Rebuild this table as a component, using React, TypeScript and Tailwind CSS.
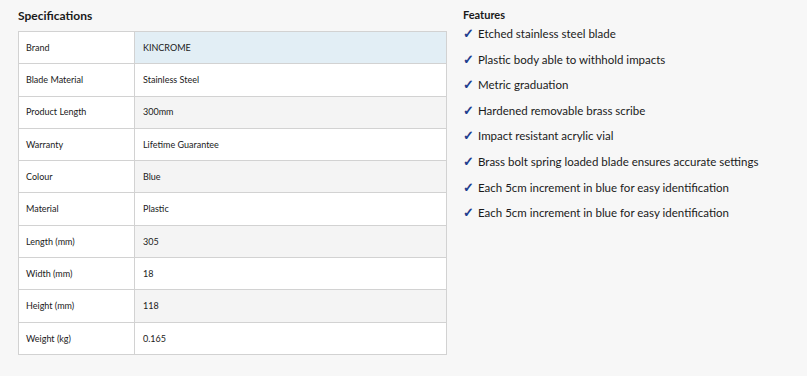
const specs: [string, string][] = [
  ['Brand', 'KINCROME'],
  ['Blade Material', 'Stainless Steel'],
  ['Product Length', '300mm'],
  ['Warranty', 'Lifetime Guarantee'],
  ['Colour', 'Blue'],
  ['Material', 'Plastic'],
  ['Length (mm)', '305'],
  ['Width (mm)', '18'],
  ['Height (mm)', '118'],
  ['Weight (kg)', '0.165'],
];

const features = [
  'Etched stainless steel blade',
  'Plastic body able to withhold impacts',
  'Metric graduation',
  'Hardened removable brass scribe',
  'Impact resistant acrylic vial',
  'Brass bolt spring loaded blade ensures accurate settings',
  'Each 5cm increment in blue for easy identification',
  'Each 5cm increment in blue for easy identification',
];

function valueBg(index: number) {
  if (index === 0) return 'bg-[#e2eef5]';
  return index % 2 === 0 ? 'bg-[#f4f4f4]' : 'bg-white';
}

export default function App() {
  return (
    <div className="flex h-[376px] w-[807px] gap-[16px] bg-[#f7f7f7] pl-[18px] pt-[8px] font-['Lato',sans-serif] text-[#1a1a1a]">
      <section className="w-[429px]">
        <h2 className="h-[23px] text-[12px] font-bold leading-[16px]">Specifications</h2>
        <div className="border border-[#d2d2d2] border-b-0">
          {specs.map(([label, value], index) => (
            <div key={label} className="flex h-[32.3px] border-b border-[#d2d2d2] text-[9px]">
              <div className="flex w-[116px] items-center border-r border-[#d2d2d2] bg-white pl-[7px]">
                {label}
              </div>
              <div className={`flex flex-1 items-center pl-[8px] ${valueBg(index)}`}>{value}</div>
            </div>
          ))}
        </div>
      </section>

      <section>
        <h2 className="text-[11px] font-bold leading-[14px]">Features</h2>
        <ul className="mt-[4px]">
          {features.map((feature, index) => (
            <li key={index} className="flex h-[25.6px] items-start text-[11.5px] leading-[16px]">
              <span className="w-[15px] text-[12.5px] font-bold text-[#1f3f8f]">✓</span>
              <span>{feature}</span>
            </li>
          ))}
        </ul>
      </section>
    </div>
  );
}
